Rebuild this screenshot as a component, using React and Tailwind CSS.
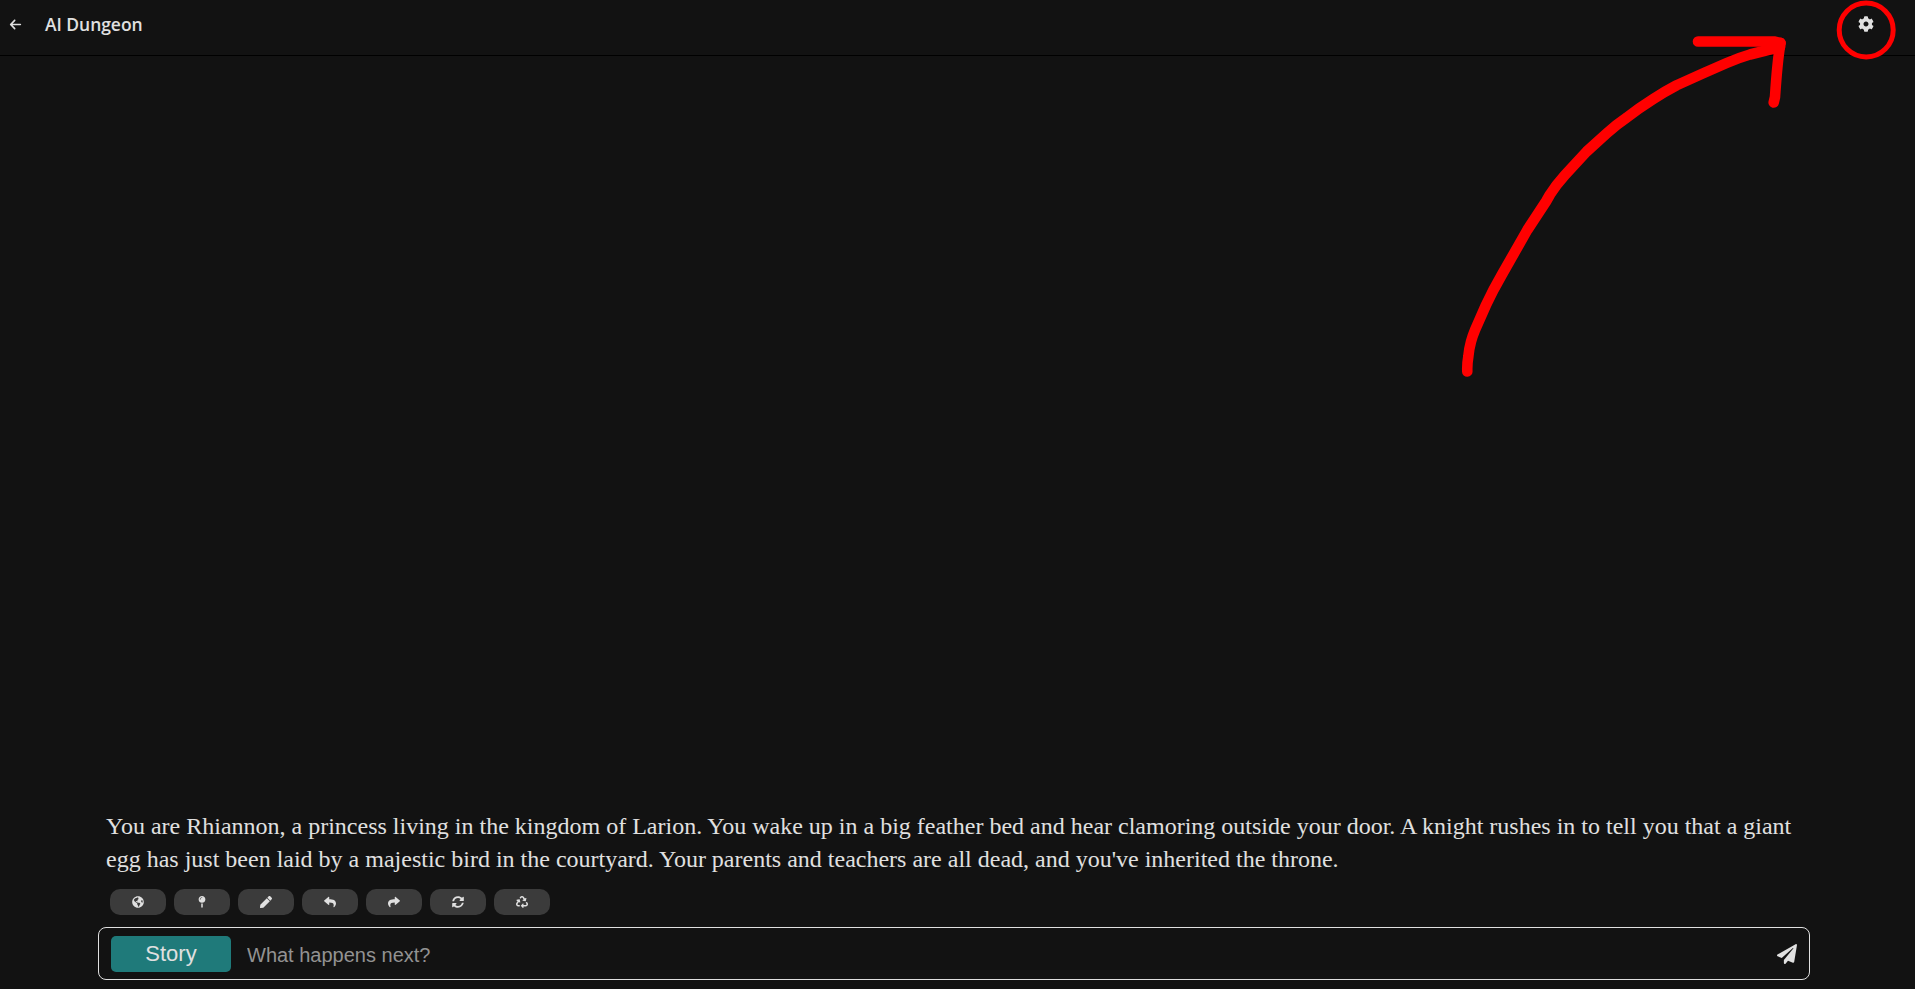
import { useState } from 'react';
import { FaArrowLeft } from 'react-icons/fa6';
import {
    FaCog,
    FaGlobeAmericas,
    FaMapPin,
    FaPaperPlane,
    FaPen,
    FaRecycle,
    FaReply,
    FaShare,
    FaSyncAlt,
} from 'react-icons/fa';

const actions = [
    { name: 'world', Icon: FaGlobeAmericas },
    { name: 'pin', Icon: FaMapPin },
    { name: 'edit', Icon: FaPen },
    { name: 'undo', Icon: FaReply },
    { name: 'redo', Icon: FaShare },
    { name: 'retry', Icon: FaSyncAlt },
    { name: 'restart', Icon: FaRecycle },
];

const Header = () => (
    <header className="flex h-14 shrink-0 items-start justify-between border-b border-black pl-[9px] pr-[41px]">
        <div className="flex h-12 items-center">
            <button className="text-[13px]">
                <FaArrowLeft />
            </button>
            <h1 className="ml-[23px] pt-px font-['Open_Sans',sans-serif] text-[17.5px] font-semibold tracking-[-0.05px]">AI Dungeon</h1>
        </div>
        <button className="flex h-12 items-center text-[16px]">
            <FaCog />
        </button>
    </header>
);

// Hand drawn arrow and ring that lead to the settings button
const SettingsHint = () => (
    <svg
        className="pointer-events-none absolute right-0 top-0 h-[400px] w-[475px]"
        viewBox="0 0 475 400"
        fill="none"
        stroke="#ff0000"
        strokeLinecap="round"
        strokeLinejoin="round"
    >
        <circle cx="426.200" cy="30" r="27" strokeWidth="5" />
        <g strokeWidth="10.6">
            <path d="M27.3 371.500Q27 364 28.300 356.700Q29 349 31 341.700Q32.500 336 35 330L46 305Q53 290 61.700 275L87.300 230L106 201.500L110 194.500Q116 185 125 175L146.700 151.500L166.700 133.300Q176 125 186.700 117.700Q199 108 213.300 99Q224 92 236.700 85.300L263.300 73.200L286.700 63Q298 58 310 54.500L340 47" />
            <path d="M258 41.500H334L340.500 43" />
            <path d="M340.500 43C338 57 336.500 74 335 97L333.700 102.500" />
        </g>
    </svg>
);

const App = () => {
    const [input, setInput] = useState('');

    return (
        <div className="relative flex h-screen flex-col overflow-hidden bg-[#121212] text-[#e0e0e0]">
            <Header />

            <main className="flex flex-1 flex-col justify-end pb-[9px] pl-[98px] pr-[105px]">
                {/* Story text */}
                <p className="px-2 font-['Liberation_Serif',serif] text-[24px] leading-[33px]">
                    You are Rhiannon, a princess living in the kingdom of Larion. You wake up in a big feather bed and hear clamoring outside your door. A knight rushes in to tell you that a giant egg has just been laid by a majestic bird in the courtyard. Your parents and teachers are all dead, and you've inherited the throne.
                </p>

                {/* Actions */}
                <div className="mt-[13px] flex gap-2 pl-3">
                    {actions.map(({ name, Icon }) => (
                        <button key={name} className="flex h-[26px] w-14 items-center justify-center rounded-[10px] bg-[#3b3b3b] text-[12px]">
                            <Icon />
                        </button>
                    ))}
                </div>

                {/* Input */}
                <div className="mt-3 flex h-[53px] items-center rounded-lg border border-[#e0e0e0] px-3">
                    <button className="h-9 w-[120px] rounded-[5px] bg-[#1f7a7a] font-['Liberation_Sans',sans-serif] text-[22px] leading-none">
                        Story
                    </button>
                    <input
                        value={input}
                        onChange={(e) => setInput(e.target.value)}
                        placeholder="What happens next?"
                        className="ml-4 flex-1 bg-transparent pt-0.5 font-['Liberation_Sans',sans-serif] text-[20px] outline-none placeholder:text-[#929292]"
                    />
                    <button className="text-[20px]">
                        <FaPaperPlane />
                    </button>
                </div>
            </main>

            <SettingsHint />
        </div>
    );
};

export default App;
